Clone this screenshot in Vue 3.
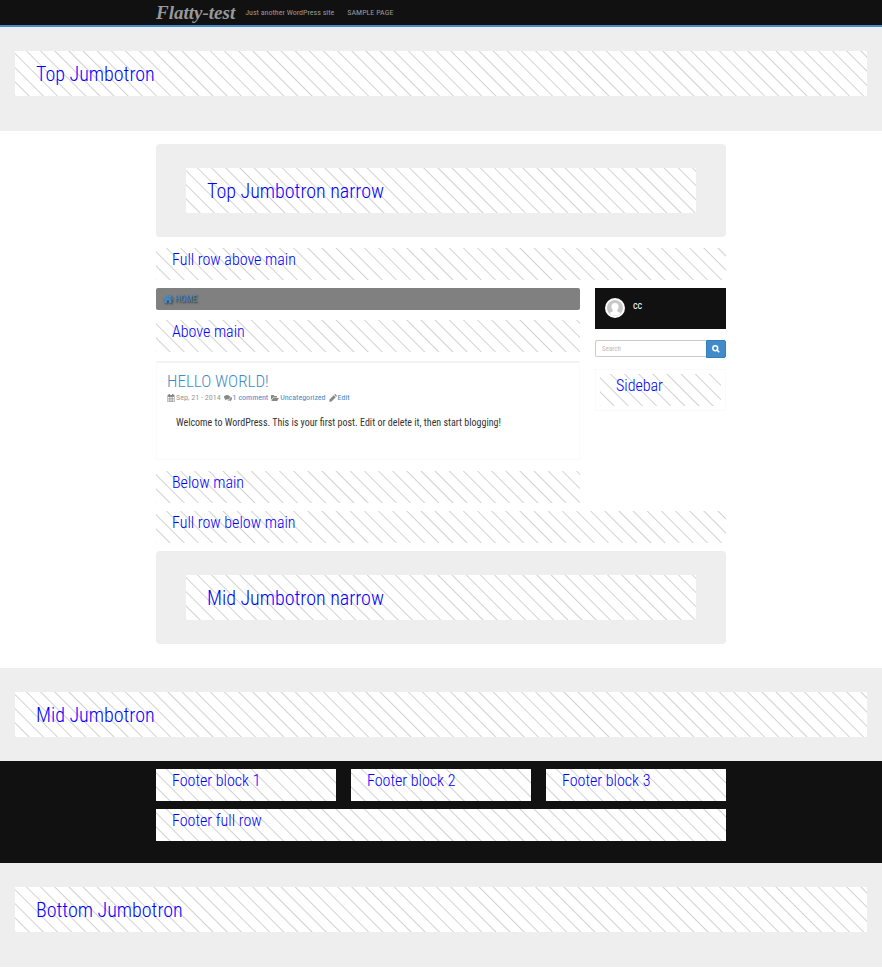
<script setup>
const crumbs = [{ label: 'Home', href: '#home' }]
const footerBlocks = ['Footer block 1', 'Footer block 2', 'Footer block 3']
</script>

<template>
  <div class="page">
    <header class="topbar">
      <div class="container topbar-inner">
        <a class="brand" href="#home">Flatty-test</a>
        <span class="tagline">Just another WordPress site</span>
        <nav><a class="nav-link" href="#sample">Sample Page</a></nav>
      </div>
    </header>

    <section class="jumbo tall"><div class="hatch large">Top Jumbotron</div></section>

    <main class="container content">
      <section class="jumbo narrow"><div class="hatch large">Top Jumbotron narrow</div></section>
      <div class="hatch row-above">Full row above main</div>

      <div class="columns">
        <div class="primary">
          <nav class="crumbs" aria-label="Breadcrumb">
            <a v-for="c in crumbs" :key="c.label" :href="c.href">
              <svg class="home" viewBox="0 0 20 16" aria-hidden="true">
                <path d="M10 3.500 L17 9.500 V15 Q17 16 16 16 H12 V11 H8 V16 H4 Q3 16 3 15 V9.500 Z" />
                <path d="M10 0 L13.500 3 V1 H16.500 V5.500 L20 8.500 L18.800 10 L10 2.900 L1.200 10 L0 8.500 Z" />
              </svg>
              <span>{{ c.label }}</span>
            </a>
          </nav>
          <div class="hatch">Above main</div>
          <article class="post">
            <h2><a href="#hello">Hello world!</a></h2>
            <div class="meta">
              <span class="item">
                <svg viewBox="0 0 16 16" aria-hidden="true"><path fill-rule="evenodd" d="M1 2H3V0H6V2H10V0H13V2H15V16H1ZM2 6V8.500H4.500V6ZM5.500 6V8.500H7.500V6ZM8.500 6V8.500H10.500V6ZM11.500 6V8.500H14V6ZM2 9.500V11.500H4.500V9.500ZM5.500 9.500V11.500H7.500V9.500ZM8.500 9.500V11.500H10.500V9.500ZM11.500 9.500V11.500H14V9.500ZM2 12.500V15H4.500V12.500ZM5.500 12.500V15H7.500V12.500ZM8.500 12.500V15H10.500V12.500ZM11.500 12.500V15H14V12.500Z" /></svg>
                Sep, 21 - 2014
              </span>
              <span class="item">
                <svg viewBox="0 0 16 16" aria-hidden="true"><path d="M6 2C9.500 2 12 4 12 6.500S9.500 11 6 11L4.500 10.900Q3 12.500 1 12.500Q2.200 11.500 2.300 10Q0 8.800 0 6.500C0 4 2.500 2 6 2Z" /><path d="M13 5Q16 6.500 16 9Q16 11 14 12.300Q14.200 13.800 15.500 14.700Q13.500 14.700 12 13.100Q8.500 13.600 6.500 12Q12.500 11.700 13 7Z" /></svg>
                <a href="#comments">1 comment</a>
              </span>
              <span class="item">
                <svg viewBox="0 0 16 16" aria-hidden="true"><path d="M0 12V3Q0 2 1 2H5Q6 2 6 4H11Q12 4 12 6V7H5Q3.500 7 2.500 8.500Z" /><path d="M5 8H16L13 13Q12.500 14 11 14H0.500L3.500 9Q4 8 5 8Z" /></svg>
                <a href="#uncategorized">Uncategorized</a>
              </span>
              <span class="item">
                <svg viewBox="0 0 16 16" aria-hidden="true"><path d="M1 11L9.500 2.500L13.500 6.500L5 15L0.500 15.500ZM10.500 1.500L12 0.300Q12.600 0 13.200 0.500L15.600 3Q16 3.500 15.600 4.300L14.500 5.500Z" /></svg>
                <a href="#edit">Edit</a>
              </span>
            </div>
            <p>Welcome to WordPress. This is your first post. Edit or delete it, then start blogging!</p>
          </article>
          <div class="hatch">Below main</div>
        </div>

        <aside class="sidebar">
          <div class="user">
            <svg class="avatar" viewBox="0 0 20 20" role="img" aria-label="Avatar">
              <circle cx="10" cy="10" r="10" fill="#fff" />
              <circle cx="10" cy="10" r="8" fill="#c8c8c8" />
              <path d="M10 5C12.400 5 13.700 6.500 13.600 8.700C13.500 10.300 12.800 11.300 12.200 12V13.300L15.500 15L13 17.500H7L4.500 15L7.800 13.300V12C7.200 11.300 6.500 10.300 6.400 8.700C6.300 6.500 7.600 5 10 5Z" fill="#fff" />
            </svg>
            <span>cc</span>
          </div>
          <form class="search" @submit.prevent>
            <input type="search" placeholder="Search" aria-label="Search" />
            <button type="submit" aria-label="Search">
              <svg viewBox="0 0 16 16" aria-hidden="true"><circle cx="6.500" cy="6.500" r="4.800" /><path d="M10 10L14.500 14.500" /></svg>
            </button>
          </form>
          <div class="widget"><div class="hatch">Sidebar</div></div>
        </aside>
      </div>

      <div class="hatch row-below">Full row below main</div>
      <section class="jumbo narrow"><div class="hatch large">Mid Jumbotron narrow</div></section>
    </main>

    <section class="jumbo"><div class="hatch large">Mid Jumbotron</div></section>

    <footer class="footer">
      <div class="container footer-grid">
        <div v-for="b in footerBlocks" :key="b" class="hatch">{{ b }}</div>
        <div class="hatch full">Footer full row</div>
      </div>
    </footer>

    <section class="jumbo tall"><div class="hatch large">Bottom Jumbotron</div></section>
  </div>
</template>

<style>
body {
  margin: 0;
  background: #fff;
}
</style>

<style scoped>
.page {
  font-family: "Roboto Condensed", Roboto, sans-serif;
  font-size: 8px;
  line-height: 12px;
  color: #333;
  padding-bottom: 10px;
}
.page *,
.page *::before {
  box-sizing: border-box;
}
a {
  color: #428bca;
  text-decoration: none;
}
.container {
  width: 100%;
  max-width: 570px;
  margin: 0 auto;
}
.topbar {
  background: #111;
  border-bottom: 2px solid #428bca;
}
.topbar-inner {
  display: flex;
  align-items: center;
  height: 25px;
  color: #999;
}
.brand {
  font-family: "Liberation Serif", serif;
  font-size: 19px;
  font-weight: bold;
  font-style: italic;
  line-height: 24px;
  color: #999;
  margin-right: 10px;
}
.tagline {
  margin-right: 13px;
}
.nav-link {
  color: #999;
  text-transform: uppercase;
}
.jumbo {
  background: #eee;
  padding: 24px 15px;
}
.jumbo.tall {
  padding-bottom: 35px;
}
.jumbo.narrow {
  padding: 24px 30px;
  border-radius: 4px;
}
.hatch {
  background: repeating-linear-gradient(45deg, #d2d2d2 0, #fff 1px, #fff 9px, #d2d2d2 10px);
  color: #00f;
  font-size: 16px;
  font-weight: 300;
  line-height: 23px;
  height: 32px;
  padding: 0 16px;
}
.hatch.large {
  font-size: 20px;
  line-height: 46px;
  height: 45px;
  padding: 0 21px;
}
.content {
  padding: 13px 0 24px;
}
.row-above {
  margin: 11px 0 8px;
}
.row-below {
  margin: 8px 0;
}
.columns {
  display: grid;
  grid-template-columns: minmax(0, 1fr) 131px;
  gap: 15px;
}
.crumbs {
  height: 22px;
  margin-bottom: 10px;
  padding: 0 7px;
  border-radius: 2px;
  background: #808080;
  text-transform: uppercase;
  font-size: 9px;
  line-height: 22px;
  text-shadow: 1px 1px 2px #222;
}
.crumbs a {
  display: inline-flex;
  align-items: center;
  gap: 2px;
}
.home {
  width: 10px;
  height: 8px;
  fill: #428bca;
  filter: drop-shadow(1px 1px 1px #333);
}
.post {
  height: 99px;
  margin: 9px 0 11px;
  padding: 8px 10px 0;
  border: 1px solid #fafafa;
  border-top: 2px solid #f3f3f3;
}
.post h2 {
  margin: 0;
  font-size: 17px;
  line-height: 21px;
  font-weight: 300;
  text-transform: uppercase;
}
.meta {
  display: flex;
  gap: 3px;
  color: #999;
}
.item {
  display: flex;
  align-items: center;
  gap: 1px;
}
.item svg {
  width: 8px;
  height: 8px;
  fill: #888;
}
.post p {
  margin: 13px 9px 0;
  font-size: 10px;
}
.user {
  display: flex;
  height: 41px;
  padding: 10px;
  gap: 8px;
  background: #111;
  color: #fff;
  font-size: 10px;
}
.user span {
  line-height: 16px;
}
.avatar {
  width: 20px;
  height: 20px;
}
.search {
  display: flex;
  height: 18px;
  margin: 11px 0 12px;
}
.search input {
  flex: 1;
  min-width: 0;
  height: 17px;
  margin: 0;
  padding: 0 6px;
  border: 1px solid #ccc;
  border-right: 0;
  border-radius: 2px 0 0 2px;
  font: inherit;
  font-size: 7px;
  outline: none;
}
.search input::placeholder {
  color: #bbb;
}
.search button {
  display: flex;
  align-items: center;
  justify-content: center;
  width: 20px;
  padding: 0;
  border: 1px solid #357ebd;
  border-radius: 0 2px 2px 0;
  background: #428bca;
}
.search svg {
  width: 8px;
  height: 8px;
  fill: none;
  stroke: #fff;
  stroke-width: 3;
}
.widget {
  margin: -1px 0 0;
  padding: 4px;
  border: 1px solid #fafafa;
  height: 42px;
}
.footer {
  background: #111;
  padding: 8px 0 22px;
}
.footer-grid {
  display: grid;
  grid-template-columns: repeat(3, minmax(0, 1fr));
  gap: 8px 15px;
}
.full {
  grid-column: 1 / -1;
}
</style>
